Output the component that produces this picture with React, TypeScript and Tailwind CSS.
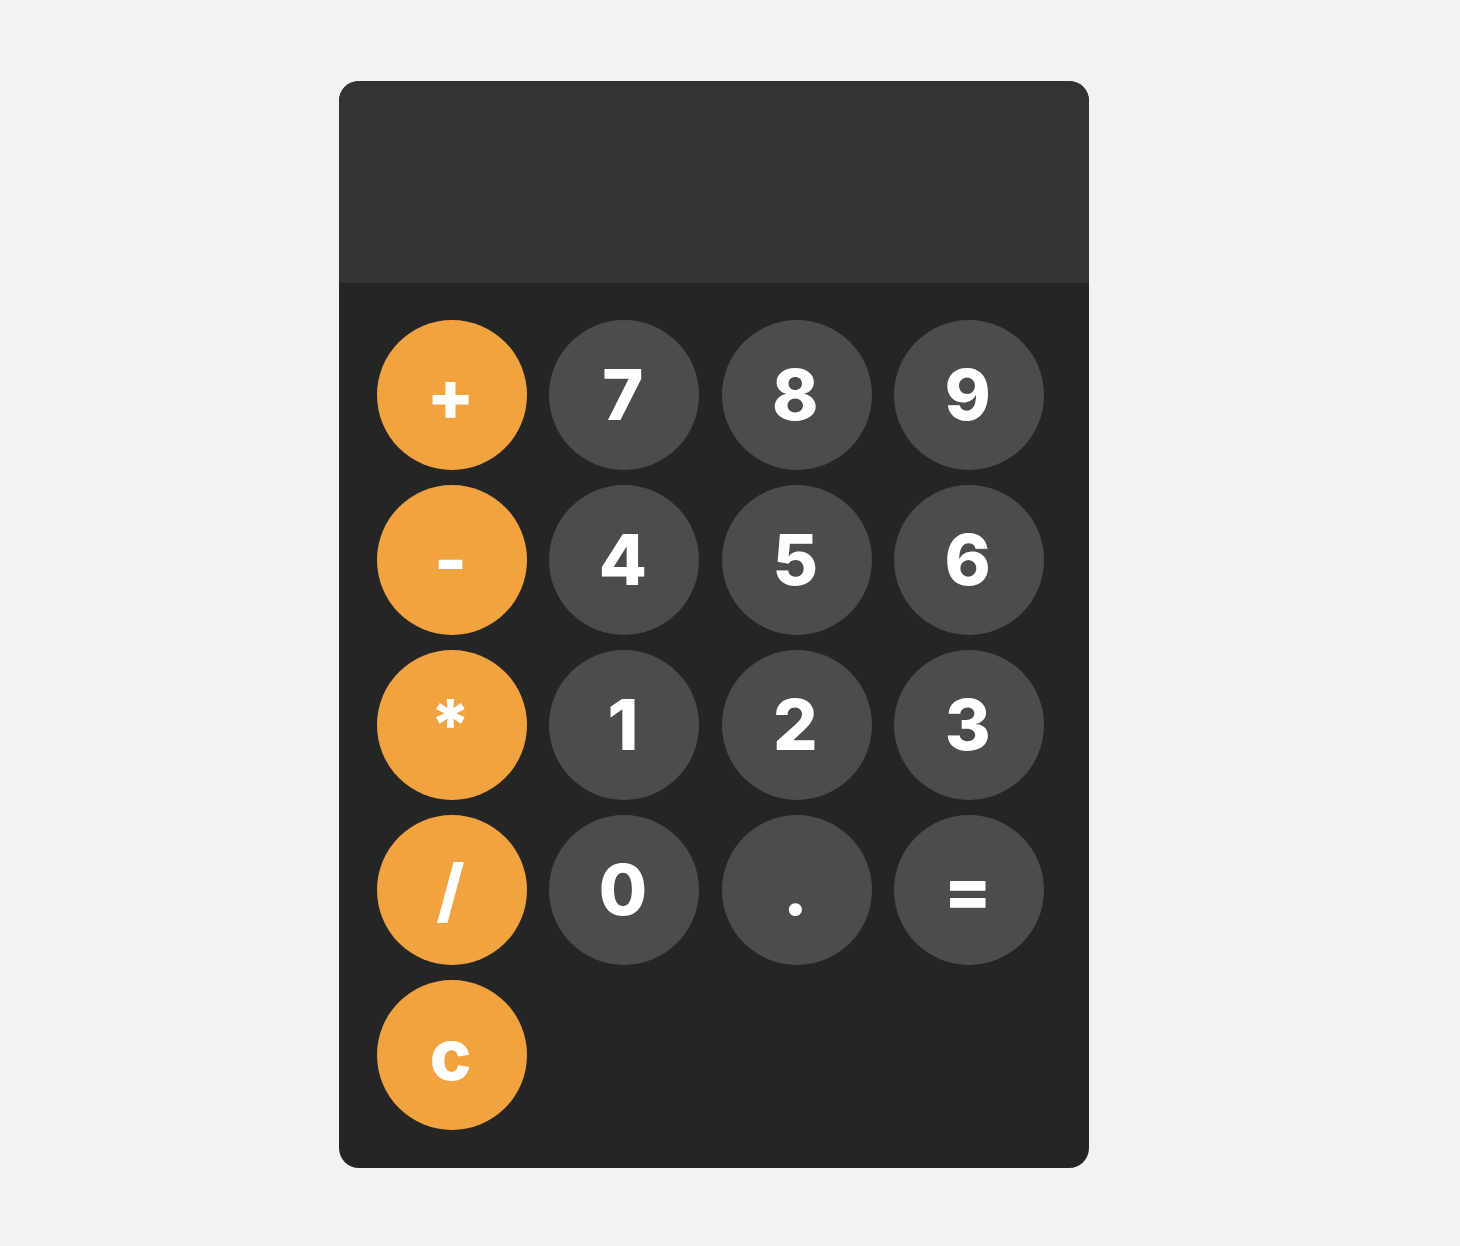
import React from "react";

const keys = [
  { label: "+", op: true },
  { label: "7" },
  { label: "8" },
  { label: "9" },
  { label: "-", op: true },
  { label: "4" },
  { label: "5" },
  { label: "6" },
  { label: "*", op: true },
  { label: "1" },
  { label: "2" },
  { label: "3" },
  { label: "/", op: true },
  { label: "0" },
  { label: "." },
  { label: "=" },
  { label: "c", op: true },
];

const Key = ({ label, op }: { label: string; op?: boolean }) => (
  <button
    className={`w-[150px] h-[150px] rounded-full flex items-center justify-center text-white font-extrabold text-[70px] leading-none pr-[3px] ${
      op ? "bg-[#f1a33f]" : "bg-[#4c4c4c]"
    }`}
  >
    {label}
  </button>
);

export default function App() {
  return (
    <div
      className="min-h-[1246px] w-full bg-[#f2f2f2] pt-[81px]"
      style={{ fontFamily: "Inter, 'Liberation Sans', sans-serif" }}
    >
      <div className="ml-[339px] w-[750px] h-[1087px] rounded-[20px] overflow-hidden bg-[#252525] flex flex-col">
        {/* display */}
        <div className="h-[202px] bg-[#333333]" />

        {/* keypad */}
        <div className="grid grid-cols-[repeat(4,150px)] gap-x-[22.4px] gap-y-[15px] pl-[38px] pt-[37px]">
          {keys.map((k) => (
            <Key key={k.label} label={k.label} op={k.op} />
          ))}
        </div>
      </div>
    </div>
  );
}
